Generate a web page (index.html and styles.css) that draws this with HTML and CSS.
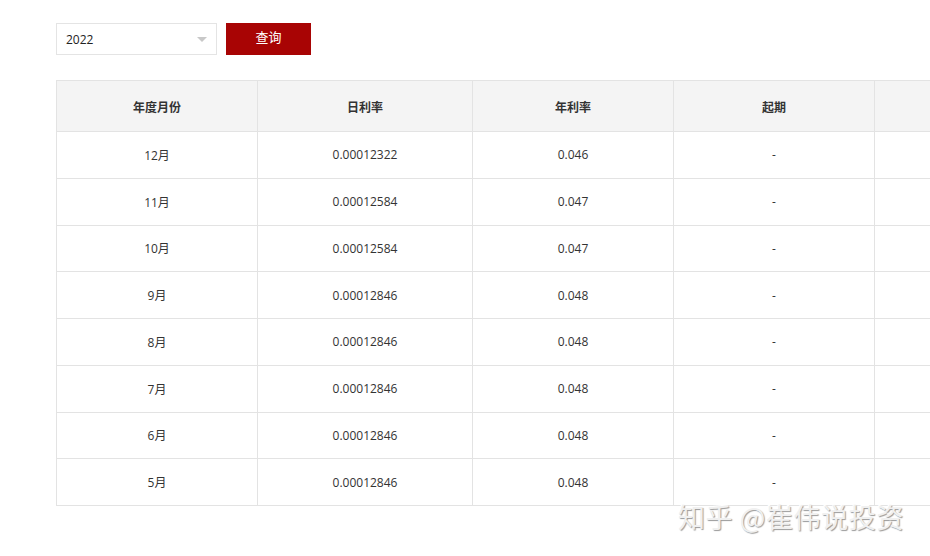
FILE: index.html
```html
<!DOCTYPE html>
<html lang="zh">
<head>
<meta charset="utf-8">
<link rel="stylesheet" href="styles.css">
</head>
<body>
<div class="page">
  <div class="toolbar">
    <div class="select">
      <span class="select-value">2022</span>
      <span class="caret"></span>
    </div>
    <button class="btn">查询</button>
  </div>
  <div class="table-wrap">
    <table class="rates">
      <thead>
        <tr><th>年度月份</th><th class="w2">日利率</th><th>年利率</th><th>起期</th><th class="w5"></th></tr>
      </thead>
      <tbody>
        <tr><td>12月</td><td>0.00012322</td><td>0.046</td><td>-</td><td></td></tr>
        <tr><td>11月</td><td>0.00012584</td><td>0.047</td><td>-</td><td></td></tr>
        <tr><td>10月</td><td>0.00012584</td><td>0.047</td><td>-</td><td></td></tr>
        <tr><td>9月</td><td>0.00012846</td><td>0.048</td><td>-</td><td></td></tr>
        <tr><td>8月</td><td>0.00012846</td><td>0.048</td><td>-</td><td></td></tr>
        <tr><td>7月</td><td>0.00012846</td><td>0.048</td><td>-</td><td></td></tr>
        <tr><td>6月</td><td>0.00012846</td><td>0.048</td><td>-</td><td></td></tr>
        <tr><td>5月</td><td>0.00012846</td><td>0.048</td><td>-</td><td></td></tr>
      </tbody>
    </table>
  </div>
  <div class="watermark">知乎 @崔伟说投资</div>
</div>
</body>
</html>
```
FILE: styles.css
```css
html, body {
  margin: 0;
  padding: 0;
  background: #fff;
}
body {
  width: 930px;
  height: 556px;
  overflow: hidden;
  font-family: "Open Sans", "Noto Sans CJK SC", sans-serif;
  color: #333;
}
.page {
  position: relative;
  width: 930px;
  height: 556px;
  padding: 23px 0 0 56px;
  box-sizing: border-box;
}
.toolbar {
  display: flex;
  gap: 9px;
  height: 32px;
}
.select {
  width: 161px;
  height: 32px;
  box-sizing: border-box;
  border: 1px solid #e4e4e4;
  display: flex;
  align-items: center;
  justify-content: space-between;
  padding: 0 9px 0 9px;
  font-size: 12px;
  color: #222;
}
.caret {
  width: 0;
  height: 0;
  border-left: 5px solid transparent;
  border-right: 5px solid transparent;
  border-top: 5px solid #c8c8c8;
}
.btn {
  width: 85px;
  height: 32px;
  border: none;
  background: #a80404;
  color: #fff;
  font-family: "Noto Sans CJK SC", sans-serif;
  font-size: 13px;
  line-height: 28px;
  padding: 0 0 4px 0;
}
.table-wrap {
  margin-top: 25px;
  width: 874px;
  overflow: hidden;
}
.rates {
  border-collapse: collapse;
  table-layout: fixed;
  width: 1020px;
  font-size: 12px;
}
.rates th, .rates td {
  width: 200px;
  border: 1px solid #e3e3e3;
  text-align: center;
  padding: 0;
}
.rates th.w2 { width: 214px; }
.rates th.w5 { width: 200px; }
.rates th {
  height: 50px;
  background: #f4f4f4;
  font-family: "Noto Sans CJK SC", sans-serif;
  font-weight: 700;
  color: #333;
}
.rates td {
  height: 45.75px;
  color: #333;
}
.watermark {
  position: absolute;
  left: 678px;
  top: 497px;
  font-family: "Noto Sans CJK SC", sans-serif;
  font-size: 27px;
  letter-spacing: 0.6px;
  color: #f0f0f0;
  text-shadow: 1px 1px 1px #9a9a9a, -1px -1px 0 #fff;
}
```
